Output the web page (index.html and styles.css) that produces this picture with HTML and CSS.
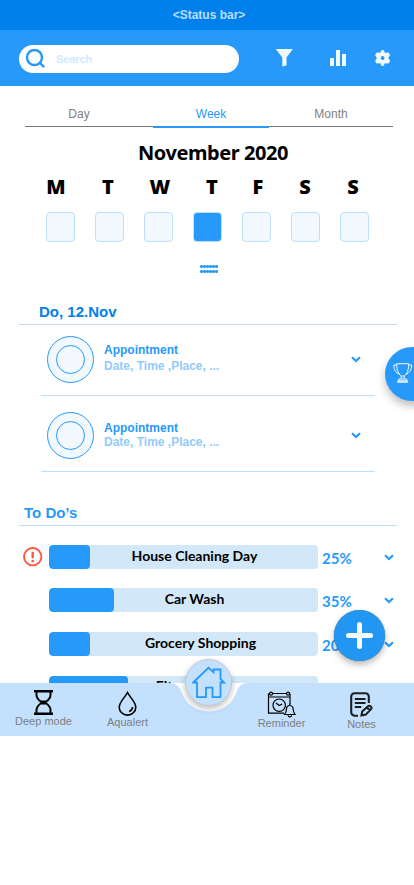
FILE: index.html
```html
<!DOCTYPE html>
<html lang="en">
<head>
<meta charset="utf-8">
<title>Planner</title>
<link rel="stylesheet" href="styles.css">
</head>
<body>
<div class="phone">
  <div class="status">&lt;Status bar&gt;</div>
  <header class="toolbar">
    <div class="search">
      <svg width="21" height="21" viewBox="0 0 21 21"><circle cx="9.500" cy="8.500" r="7.500"/><path d="M14.500 13.500l4.700 4.700"/></svg>
      <span>Search</span>
    </div>
    <svg class="filter" width="18" height="18" viewBox="0 0 18 18"><path d="M.8 0h17L11.500 8.500v8L7.300 17.500v-9z"/></svg>
    <svg class="chart" width="16" height="16" viewBox="0 0 16 16"><path d="M0 8h4v8H0zM6 0h4v16H6zM12 4h4v12h-4z"/></svg>
    <svg class="gear" width="16" height="16" viewBox="0 0 16 16"><path fill-rule="evenodd" d="M6.700 0h1.800l1.400 2.800 3.700-.4 1.500 2.600-1.800 3 1.800 3-1.500 2.600-3.700-.4L8.500 16H6.700l-1.400-2.800-3.700.4L.1 11l1.800-3L.1 5l1.500-2.600 3.700.4zM7.600 6.100a1.900 1.900 0 1 0 0 3.800 1.900 1.900 0 0 0 0-3.800z"/></svg>
  </header>

  <nav class="tabs"><span>Day</span><span class="active">Week</span><span>Month</span></nav>

  <section class="calendar">
    <h1>November 2020</h1>
    <div class="letters"><b>M</b><b>T</b><b>W</b><b>T</b><b>F</b><b>S</b><b>S</b></div>
    <div class="days"><i></i><i></i><i></i><i class="on"></i><i></i><i></i><i></i></div>
    <svg class="grip" width="18" height="8" viewBox="0 0 18 8"><path d="M0 1.500h18M0 6.500h18"/><path class="dots" d="M.5 1.500H18M.5 6.500H18"/></svg>
  </section>

  <section class="agenda">
    <h2>Do, 12.Nov</h2>
    <article class="event">
      <div class="avatar"><div></div></div>
      <div class="info"><b>Appointment</b><span>Date, Time ,Place, ...</span></div>
      <svg class="chev" width="10" height="7" viewBox="0 0 10 7"><path d="M1 1.300l4 3.700 4-3.700"/></svg>
    </article>
    <article class="event second">
      <div class="avatar"><div></div></div>
      <div class="info"><b>Appointment</b><span>Date, Time ,Place, ...</span></div>
      <svg class="chev" width="10" height="7" viewBox="0 0 10 7"><path d="M1 1.300l4 3.700 4-3.700"/></svg>
    </article>
  </section>

  <section class="todos">
    <h2>To Do’s</h2>
    <div class="todo first">
      <svg class="alert" width="20" height="20" viewBox="0 0 20 20"><circle cx="9.700" cy="9.700" r="8.700"/><path class="mark" d="M9.700 4.700v6.500M9.700 13v2.300"/></svg>
      <div class="bar"><div class="fill" style="width:41px"></div><span>House Cleaning Day</span></div>
      <em>25%</em>
      <svg class="chev" width="10" height="7" viewBox="0 0 10 7"><path d="M1 1.300l4 3.700 4-3.700"/></svg>
    </div>
    <div class="todo">
      <div class="bar"><div class="fill" style="width:65px"></div><span>Car Wash</span></div>
      <em>35%</em>
      <svg class="chev" width="10" height="7" viewBox="0 0 10 7"><path d="M1 1.300l4 3.700 4-3.700"/></svg>
    </div>
    <div class="todo">
      <div class="bar"><div class="fill" style="width:41px"></div><span class="wide">Grocery Shopping</span></div>
      <em>20%</em>
      <svg class="chev" width="10" height="7" viewBox="0 0 10 7"><path d="M1 1.300l4 3.700 4-3.700"/></svg>
    </div>
    <div class="todo">
      <div class="bar"><div class="fill" style="width:79px"></div><span class="last">Fitness</span></div>
    </div>
  </section>

  <div class="trophy">
    <svg width="20" height="20" viewBox="0 0 20 20"><path d="M3.700.7h12c0 6-1.500 10.300-4.500 12.300h-3C5.200 11 3.700 6.700 3.700.7zM3.700 2H.7c.2 5 2.300 8.300 6.300 9.500M15.700 2h3c-.2 5-2.300 8.300-6.300 9.500M8.200 13v3M11.200 13v3M5.700 16h8v2h-8zM4.700 19.300h10V18h-10z"/></svg>
  </div>
  <div class="add"><svg width="28" height="28" viewBox="0 0 28 28"><path d="M13.500 2.500v22M2.500 13.500h22"/></svg></div>

  <footer class="dock">
    <svg class="dock-bg" width="414" height="53" viewBox="0 0 414 53"><path class="gap" d="M168 0h82l-6 16-34 14-34-14z"/><path d="M0 0h170c6 .4 9 3 11 8 4 12 13 20 28 20.500 15-.5 24-8.500 28-20.500 2-5 5-8 11-8h166v53H0z"/></svg>
    <div class="item deep">
      <svg width="19" height="25" viewBox="0 0 19 25"><path class="thick" d="M0 1.200h19M0 23.800h19"/><path d="M2.500 2v3c0 4 2.500 5.500 5.500 7.500-3 2-5.500 3.500-5.500 7.500v3M16.500 2v3c0 4-2.500 5.500-5.500 7.500 3 2 5.500 3.500 5.500 7.500v3M7 11.500h5M7 13.500h5"/></svg>
      <span>Deep mode</span>
    </div>
    <div class="item aqua">
      <svg width="19" height="25" viewBox="0 0 19 25"><path d="M9.500 1.500C7 6.500 1.200 11 1.200 16.200a8.300 7.900 0 0 0 16.600 0C17.800 11 12 6.500 9.500 1.500z"/><path d="M14.500 16c0 2.300-1.200 3.800-3.300 4.500"/></svg>
      <span>Aqualert</span>
    </div>
    <div class="item remind">
      <svg width="29" height="27" viewBox="0 0 29 27"><path d="M1.500 2.500v19.700H17M5.500 2.500h14M23 2.500V13M1.500 6H23"/><circle cx="4" cy="2.700" r="1.500"/><circle cx="21" cy="2.700" r="1.500"/><circle cx="12.200" cy="14.200" r="6.200"/><path d="M9 12l3.200 2.500 3-1.500"/><path class="bell" d="M22.800 14.500c-2.600 0-3.400 2-3.400 4.300 0 2.200-.7 3.200-1.900 4.700h10.600c-1.200-1.500-1.900-2.500-1.900-4.700 0-2.300-.8-4.300-3.400-4.300zM22.800 12.700v1.800M21 24.300c.4 2 3.200 2 3.600 0"/></svg>
      <span>Reminder</span>
    </div>
    <div class="item notes">
      <svg width="23" height="25" viewBox="0 0 23 25"><path d="M8 23.700H4.500A3.500 3.500 0 0 1 1.200 20V4.500a3.300 3.300 0 0 1 3.300-3.300h11a3.300 3.300 0 0 1 3.300 3.300V11"/><path class="lines" d="M4.800 7h10.700M4.800 11h10.700M4.800 15h6.500"/><path d="M11.500 23.500l.7-4L18 14.300c1.800-1.500 4.500 1 3 2.800l-5.200 5.500zM17 15.500l3 3"/></svg>
      <span>Notes</span>
    </div>
    <div class="home">
      <svg width="34" height="33" viewBox="0 0 34 33"><path d="M1.200 16.500L16.500 1.800l5 4.500V3.500h7v9.500l3.500 3.500h-3.500v14.700h-8v-9.500h-6.500v9.500H5V16.500z"/></svg>
    </div>
  </footer>
</div>
</body>
</html>
```

FILE: styles.css
```css
* { box-sizing: border-box; }
body { margin: 0; background: #fff; font-family: "Liberation Sans", sans-serif; }
svg { display: block; flex: none; fill: none; }
h1, h2 { margin: 0; }
.phone { position: relative; width: 414px; height: 736px; overflow: hidden; }

.status { height: 30px; padding-left: 4px; background: #0080ec; color: #b9dfff; text-align: center; font: bold 12px/30px "Liberation Sans", sans-serif; }
.toolbar { height: 56px; background: #2699fb; display: flex; padding: 15px 0 0 19px; }
.toolbar > svg { fill: #f1f9ff; }
.search { width: 220px; height: 28px; border-radius: 14px; background: #fff; display: flex; padding: 3px 0 0 6px; }
.search svg { stroke: #2699fb; stroke-width: 2.4; margin-top: 1px; }
.search span { margin-left: 10px; color: #cfeaff; font: bold 11px/23px "Liberation Sans", sans-serif; letter-spacing: -.1px; }
.filter { margin: 4px 0 0 36px; }
.chart { margin: 5px 0 0 37px; }
.gear { margin: 5px 0 0 29px; }

.tabs { display: grid; grid-template-columns: 128px 116px 124px; margin-left: 25px; height: 42px; padding: 14px 0 1px; }
.tabs span { height: 27px; text-align: center; font-size: 12px; line-height: 28px; color: #7f7f7f; border-bottom: 1px solid #777; padding-right: 20px; }
.tabs .active { height: 28px; color: #2699fb; border-bottom: 2px solid #2699fb; padding-right: 0; }
.tabs span:last-child { padding-right: 0; }

.calendar { height: 162px; padding-top: 11px; }
.calendar h1 { font: bold 20px/28px "Noto Sans", sans-serif; letter-spacing: -.45px; text-align: center; padding-left: 12px; color: #000; }
.letters { display: grid; grid-template-columns: 52px 52px 52px 52px 40px 54px 42px; margin: 6px 0 0 30px; text-align: center; font: bold 20px/28px "Noto Sans", sans-serif; }
.days { display: flex; gap: 20px; margin: 11px 0 0 46px; }
.days i { width: 29px; height: 30px; border: 1px solid #bce0fd; border-radius: 4px; background: #f1f9ff; }
.days .on { background: #2699fb; }
.grip { margin: 23px 0 0 200px; stroke: #2699fb; stroke-width: 1.5; }
.grip .dots { stroke-width: 3; stroke-dasharray: 2 1; }

.agenda h2 { margin-left: 19px; width: 378px; height: 35px; padding-left: 20px; border-bottom: 1px solid #bce0fd; color: #0080ec; font-size: 15px; line-height: 44px; }
.event { margin-left: 41px; width: 334px; height: 71px; padding: 11px 14px 0 6px; display: flex; border-bottom: 1px solid #bce0fd; }
.event.second { height: 76px; padding-top: 16px; }
.avatar { width: 47px; height: 47px; border: 1px solid #2699fb; border-radius: 50%; background: #f1f9ff; padding: 8px; }
.avatar div { width: 29px; height: 29px; border: 1px solid #2699fb; border-radius: 50%; }
.info { margin: 6px 0 0 10px; flex: 1; font-weight: bold; font-size: 12px; line-height: 16px; }
.info b, .info span { display: block; }
.info b { color: #2699fb; }
.info span { color: #93cbfb; }
.second .info { margin-top: 9px; line-height: 14px; }
.chev { stroke: #2699fb; stroke-width: 2.2; }
.event .chev { margin-top: 20px; }

.todos { padding-top: 24px; }
.todos h2 { margin: 0 0 19px 19px; width: 378px; height: 30px; padding-left: 5px; border-bottom: 1px solid #bce0fd; color: #2699fb; font-size: 15px; line-height: 34px; }
.todo { display: flex; height: 24px; margin-bottom: 20px; padding-left: 49px; }
.todo.first { margin-bottom: 19px; }
.alert { margin: 2px 6px 0 -26px; stroke: #ff533d; stroke-width: 1.9; }
.alert .mark { stroke-width: 2.3; }
.bar { width: 269px; height: 24px; border-radius: 4px; background: #d2e7f8; display: grid; overflow: hidden; }
.bar > * { grid-area: 1 / 1; }
.fill { height: 24px; border-radius: 4px; background: #2699fb; }
.bar span { text-align: center; padding-left: 22px; color: #000; font: bold 14px/22px Lato, sans-serif; }
.bar .wide { padding-left: 34px; }
.bar .last { padding: 0 11px 0 0; line-height: 20px; }
.todo em { width: 62px; padding-left: 4px; color: #2699fb; font: bold 15px/26px Lato, sans-serif; }
.todo .chev { margin: 9px 0 0 4px; }

.trophy { position: absolute; left: 385px; top: 347px; width: 54px; height: 54px; border-radius: 50%; background: #2699fb; padding: 16px 8px; box-shadow: 0 5px 8px rgba(0,0,0,.25); }
.trophy svg { stroke: #f1f9ff; stroke-width: 1; }
.add { position: absolute; left: 334px; top: 610px; width: 51px; height: 51px; border-radius: 50%; background: #2196f3; padding: 12px; box-shadow: 0 0 1px rgba(0,0,0,.6), 0 4px 6px rgba(0,0,0,.25); }
.add svg { stroke: #fafafa; stroke-width: 5; stroke-linecap: round; }

.dock { position: absolute; left: 0; top: 683px; width: 414px; height: 53px; display: flex; }
.dock-bg { position: absolute; left: 0; top: 0; fill: #c3e0fd; }
.dock-bg .gap { fill: #fff; }
.item { position: relative; display: flex; flex-direction: column; align-items: center; font-size: 11px; line-height: 12px; color: #7f7f7f; width: 59px; }
.item svg { stroke: #000; stroke-width: 2; }
.item .thick { stroke-width: 2.5; }
.deep { margin-left: 14px; padding-top: 7px; }
.aqua { margin-left: 25px; padding-top: 8px; }
.aqua svg { stroke-width: 1.6; }
.remind { margin-left: 95px; padding-top: 8px; }
.remind svg { stroke-width: 1.2; margin-bottom: -1px; }
.remind .bell { fill: #c3e0fd; }
.notes { margin-left: 21px; padding-top: 9px; }
.notes svg { stroke: #1c1f22; stroke-width: 2.1; margin-bottom: 1px; }
.home { position: absolute; left: 185px; top: -24px; width: 47px; height: 47px; border-radius: 50%; background: #c3e0fd; border: 1px solid #c4c9ce; padding: 6px; box-shadow: 0 3px 6px rgba(0,0,0,.25); }
.home svg { stroke: #2699fb; stroke-width: 1.8; }
```
